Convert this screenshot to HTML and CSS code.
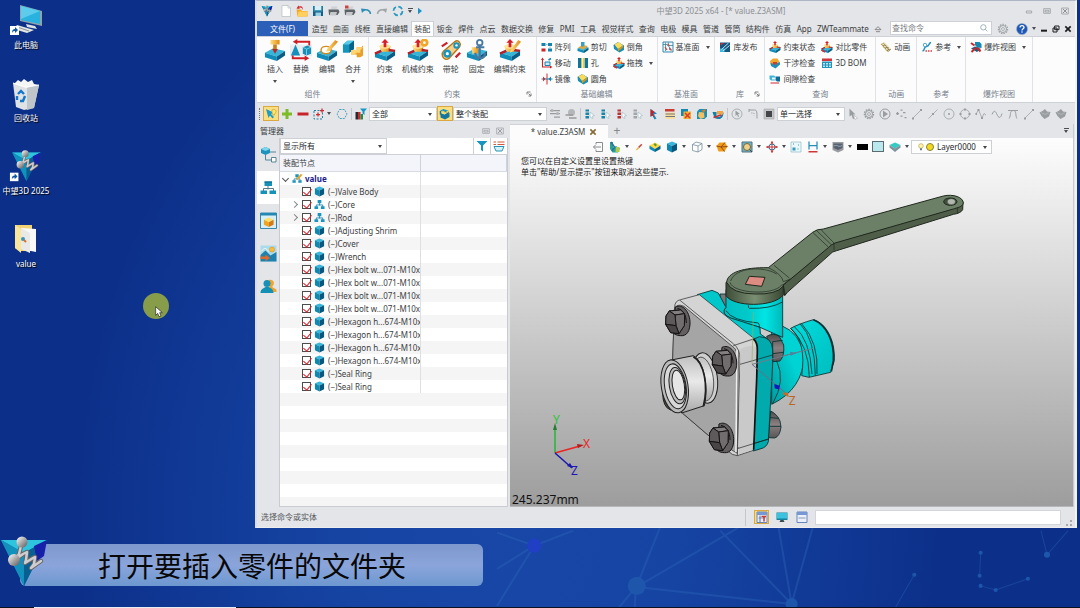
FILE: index.html
```html
<!DOCTYPE html>
<html lang="zh-CN">
<head>
<meta charset="utf-8">
<meta name="viewport" content="width=device-width, initial-scale=1">
<title>中望3D 2025 x64</title>
<link rel="stylesheet" href="styles.css">
</head>
<body>
<svg class="sprite" aria-hidden="true">
  <defs>
    <linearGradient id="gTeal" x1="0" x2="1"><stop offset="0" stop-color="#25b4dc"/><stop offset="1" stop-color="#0b6d9c"/></linearGradient>
    <linearGradient id="gGold" x1="0" x2="1"><stop offset="0" stop-color="#ffe083"/><stop offset="1" stop-color="#e08a12"/></linearGradient>
    <linearGradient id="gMetal" x1="0" x2="1" y2="1"><stop offset="0" stop-color="#fff"/><stop offset=".5" stop-color="#aaa"/><stop offset="1" stop-color="#5c5557"/></linearGradient>
  </defs>
  <symbol id="slab" viewBox="0 0 24 24"><path d="M1 15l9-5 13 3-9 6z" fill="#35b5d8"/><path d="M1 15l13 4v5L1 20z" fill="#118cb8"/><path d="M14 19l9-6v5l-9 6z" fill="#0a5e86"/></symbol>
  <symbol id="logo" viewBox="0 0 48 52">
    <path d="M1 4h46L24 50z" fill="#0a7fae"/><path d="M1 4h46L24 17z" fill="#2fc4de"/><path d="M1 4l23 13v33z" fill="#1291bd"/><path d="M47 4L24 17v33z" fill="#075f92"/><path d="M47 4L34 10l3 15 7-5z" fill="#1620a8"/>
    <path d="M22 6l-3 12-4 6M16 23l7-5 4-2-1 8-1 3 8-5 2-1-1 7-3 4 10-7" fill="none" stroke="#66656a" stroke-width="4.500" stroke-linecap="round" stroke-linejoin="round"/><path d="M22 6l-3 12-4 6M16 23l7-5 4-2-1 8-1 3 8-5 2-1-1 7-3 4 10-7" fill="none" stroke="#cfcdcf" stroke-width="2.500" stroke-linecap="round" stroke-linejoin="round"/>
    <circle cx="22" cy="6" r="5.500" fill="url(#gMetal)"/><circle cx="14" cy="24" r="6" fill="url(#gMetal)"/>
  </symbol>
  <symbol id="pc" viewBox="0 0 34 34">
    <path d="M11 1l22 6v15l-22-5z" fill="#8fa3ab"/><path d="M12 2l19 5v13l-19-4z" fill="#29b2df"/><path d="M12 2l19 5-19 8z" fill="#5ccbec"/><path d="M17 20l9 2 2 3-10-2z" fill="#dce2e4"/><path d="M8 21l17 5-7 3-13-4z" fill="#e2e5e4"/><path d="M8 23l12 4" stroke="#8b9695"/>
    <path d="M1 22h9v9H1z" fill="#fff"/><path d="M3 29c0-3 1-4 3-4v-2l3 3-3 3v-2c-1 0-2 0-3 2z" fill="#12559f"/></symbol>
  <symbol id="bin" viewBox="0 0 34 34"><path d="M4 6l26 2-5 23-10 2-8-3z" fill="#dfe3e5"/><path d="M30 8l-5 23-7 2V8z" fill="#bfc6ca"/><path d="M5 7l4-4 3 2 3-3 4 3 4-2 2 4 4 1-12 3z" fill="#f4f5f5"/><path d="M4 6l13 4 13-2" fill="none" stroke="#fff"/><path d="M9 17l3-3 3 3m1 2-2 5h-3m-3-1v-4" fill="none" stroke="#1277cb" stroke-width="2.400"/></symbol>
  <symbol id="app" viewBox="0 0 34 36"><use href="#logo" x="1" y="0" width="33" height="34"/><path d="M0 24h9v9H0z" fill="#fff"/><path d="M2 31c0-3 1-4 3-4v-2l3 3-3 3v-2c-1 0-2 0-3 2z" fill="#12559f"/></symbol>
  <symbol id="folder" viewBox="0 0 34 34"><path d="M6 2h17v26H11l-5-3z" fill="#f2d477"/><path d="M12 5l15 1v23l-15-3z" fill="#f9f9f8"/><path d="M12 5l9 5v20l-9-4z" fill="#e9e9e8"/><path d="M6 2l6 4v24l-6-5z" fill="#fbe49b"/><circle cx="14" cy="16" r="2" fill="#3d93c0"/><path d="M15 17l2 2" stroke="#d77325" stroke-width="2"/></symbol>
  <symbol id="cube" viewBox="0 0 24 24"><path d="M12 1l10 4-10 5L2 5z" fill="#39b6da"/><path d="M2 5l10 5v13L2 18z" fill="#0e89b2"/><path d="M22 5l-10 5v13l10-5z" fill="#08577e"/></symbol>
  <symbol id="gcube" viewBox="0 0 24 24"><path d="M12 2l10 5-10 5L2 7z" fill="#ffe06a"/><path d="M2 7l10 5v10L2 17z" fill="#f1a51d"/><path d="M22 7l-10 5v10l10-5z" fill="#d67a12"/></symbol>
  <symbol id="asm" viewBox="0 0 24 24"><path d="M12 9v5M5 17v-4h14v4" stroke="#2286b0" stroke-width="2" fill="none"/><path d="M8 2h8v7H8zM1 16h8v6H1zM15 16h8v6h-8z" fill="#1c93be"/></symbol>
  <symbol id="asmedit" viewBox="0 0 24 24"><use href="#asm" width="22" height="24"/><path d="M11 11L19 2l4 2-9 10-4 1z" fill="#efa21c"/></symbol>
  <symbol id="stamp" viewBox="0 0 24 24"><use href="#slab"/><path d="M7 1h10v5H7z" fill="url(#gGold)"/><path d="M10 6h4v5h-4z" fill="#c9801a"/><path d="M9 11h6l-3 5z" fill="#c32020"/></symbol>
  <symbol id="swap" viewBox="0 0 24 24"><path d="M0 6h24v13H0z" fill="#e9edf0"/><path d="M6 6l5 12H1z" fill="#1691bd"/><path d="M14 9l5-2 4 2v7l-5 2-4-2z" fill="#198fb8"/><path d="M14 9l4 2 5-2M18 11v7" stroke="#75d3ea" fill="none"/><path d="M21 7V3H7M3 18v3h14" stroke="#d01e26" stroke-width="2" fill="none"/><path d="M8 0v6L3 3zM16 18v6l5-3z" fill="#d01e26"/></symbol>
  <symbol id="edit" viewBox="0 0 24 24"><use href="#slab"/><ellipse cx="11" cy="12" rx="5.500" ry="4" fill="#fff" stroke="#d18a20" stroke-width="1.500"/><path d="M12 11L21 1l3 2-9 10-4 1z" fill="url(#gGold)"/></symbol>
  <symbol id="merge" viewBox="0 0 24 24"><path d="M1 6l5-4h7v9l-5 4H1z" fill="#1794bd"/><path d="M1 6l5-4h7L8 6z" fill="#58c9e6"/><path d="M8 6l5-4v9l-5 4z" fill="#086287"/><path d="M10 12h6V9h5l2-2v11l-3 2h-4v-3h-6z" fill="#e7a12b"/><path d="M10 12h6V9h7l-3 3v3h-4l-3 2h-3z" fill="#ffd473"/></symbol>
  <symbol id="con" viewBox="0 0 24 24"><use href="#slab"/><path d="M6 8h12l-1 6H8z" fill="url(#gGold)"/><ellipse cx="12" cy="8" rx="6" ry="2.500" fill="#ffe49a"/><path d="M1 16l7-3m15 0-7-1" stroke="#b71f2b" stroke-width="2.500"/><path d="M12 0l4 4h-2.500v5h-3V4H8z" fill="#d4202a"/></symbol>
  <symbol id="congear" viewBox="0 0 24 24"><use href="#con"/><circle cx="19" cy="4" r="3" fill="none" stroke="#f1a626" stroke-width="3"/></symbol>
  <symbol id="belt" viewBox="0 0 24 24"><path d="M4 13L16 3c4-3 8 2 5 6L10 21c-5 4-10-3-6-8z" fill="#f5d087" stroke="#b6751b" stroke-width="1.500"/><circle cx="18" cy="7" r="3.500" fill="#1995bf"/><circle cx="8" cy="16" r="4.500" fill="#1995bf"/><circle cx="8" cy="16" r="1.700" fill="#fff"/><circle cx="18" cy="7" r="1.300" fill="#fff"/><path d="M2 8L8 4M17 20l5-5" stroke="#ce2028" stroke-width="2.500"/></symbol>
  <symbol id="anchor" viewBox="0 0 24 24"><use href="#slab"/><path d="M6 9h8l-1 7H7z" fill="url(#gGold)"/><path d="M15 6v15M10 15c1 8 10 8 11 0M11 9h9" stroke="#4679a1" stroke-width="2.300" fill="none"/><circle cx="15" cy="4" r="3" fill="none" stroke="#4679a1" stroke-width="2"/></symbol>
  <symbol id="conedit" viewBox="0 0 24 24"><use href="#con"/><path d="M13 12L21 1l3 2-8 10-4 2z" fill="url(#gGold)"/></symbol>
  <symbol id="array" viewBox="0 0 24 24"><path d="M1 4h8v6H1zM14 4h8v6h-8z" fill="#1284ae"/><path d="M1 15h8v6H1z" fill="#cc2428"/><path d="M14 15h8v6h-8z" fill="#1284ae"/><path d="M10 7h3M18 11v3" stroke="#88bfd2" stroke-width="2"/></symbol>
  <symbol id="cut" viewBox="0 0 24 24"><use href="#slab"/><path d="M2 13l10-5 10 2-9 7z" fill="#e3a83b"/><path d="M8 2h7v7l-4 3-3-2z" fill="#3d9ec0"/></symbol>
  <symbol id="cham" viewBox="0 0 24 24"><path d="M1 8L10 2l12 7v9l-9 5L2 16z" fill="#1690b9"/><path d="M3 7l8-5 9 7-10 7z" fill="#ffda58"/><path d="M10 16l10-7v4l-10 8z" fill="#d8931d"/></symbol>
  <symbol id="move" viewBox="0 0 24 24"><path d="M3 4v16h17" stroke="#c9202a" stroke-width="2.200" fill="none"/><path d="M8 10h10v7H8z" fill="#c6eaf6" stroke="#1685af" stroke-width="2"/><path d="M0 6l3-5 3 5zM18 17l5 3-5 3z" fill="#c9202a"/><path d="M15 6l5-3" stroke="#1685af" stroke-width="3"/></symbol>
  <symbol id="hole" viewBox="0 0 24 24"><path d="M2 2h7v20H2zM15 2h7v20h-7z" fill="#0a75a0"/><path d="M9 2h6v20H9z" fill="#ffc43c"/><path d="M10 2h2v20h-2z" fill="#fff1ac"/></symbol>
  <symbol id="mirror" viewBox="0 0 24 24"><path d="M12 1v22" stroke="#d22c31" stroke-width="2"/><path d="M1 12h22" stroke="#1684ad" stroke-width="2"/><path d="M4 7l5 5-5 5z" fill="#d22c31"/><path d="M20 7l-5 5 5 5z" fill="#1684ad"/></symbol>
  <symbol id="drag" viewBox="0 0 24 24"><use href="#con"/><path d="M1 18l7 4" stroke="#d22c31" stroke-width="3"/></symbol>
  <symbol id="datum" viewBox="0 0 24 24"><path d="M2 2h20v20H2z" fill="#eef7fb" stroke="#3a88ad" stroke-width="2"/><path d="M7 3v17M10 8l5 4v6M2 7h8M13 3v6h9" stroke="#2c86ad" stroke-width="1.500" fill="none"/><path d="M6 12l4 6M15 14l4 5M11 6l4 4" stroke="#c94b42" stroke-width="2.500"/></symbol>
  <symbol id="lib" viewBox="0 0 24 24"><path d="M2 3h20v19H2z" fill="#15557f"/><path d="M2 15h9v7H2z" fill="#39b9df"/><path d="M5 17L19 4M8 20L21 9" stroke="#b8e3f1" stroke-width="2"/><path d="M3 4h7L4 9z" fill="#cb3038"/></symbol>
  <symbol id="interf" viewBox="0 0 24 24"><path d="M2 8l6-5h9l4 7-7 6-11-1z" fill="#f1a72c"/><path d="M3 12l9 2 10-4v5l-9 8-9-5z" fill="#1f8fba"/><path d="M8 10h8v5H8z" fill="#cb412e"/></symbol>
  <symbol id="gap" viewBox="0 0 24 24"><path d="M1 5h9l3 3v7H4l-3-3z" fill="#3fb5da"/><path d="M13 7h9v10h-6l-3-3z" fill="#0e6c98"/><path d="M3 20h17" stroke="#d22c31" stroke-width="2"/><path d="M6 9h7v4H6z" fill="#eaf8fd"/></symbol>
  <symbol id="bom" viewBox="0 0 24 24"><path d="M2 9h20v13H2z" fill="#2294bc"/><path d="M4 12h4v3H4zM10 12h4v3h-4zM16 12h4v3h-4zM4 17h4v3H4zM10 17h4v3h-4zM16 17h4v3h-4z" fill="#bce8f5"/><path d="M2 3h20v5H2z" fill="#cf3539"/></symbol>
  <symbol id="film" viewBox="0 0 24 24"><path d="M2 6l6-3 14 14-6 5z" fill="#8b7b50"/><path d="M5 5l12 15M9 4l11 12" stroke="#f1e8bd" stroke-width="3" stroke-dasharray="4 2"/><path d="M2 6l13 16" stroke="#d0a836" stroke-width="2" stroke-dasharray="2 2"/></symbol>
  <symbol id="refer" viewBox="0 0 24 24"><path d="M3 20c6-1 1-8 8-9s3-7 9-8" fill="none" stroke="#2590bb" stroke-width="3"/><circle cx="8" cy="8" r="3.500" fill="none" stroke="#51adca" stroke-width="2"/><path d="M9 20h13" stroke="#c94343" stroke-width="3" stroke-dasharray="3 2"/></symbol>
  <symbol id="explode" viewBox="0 0 24 24"><path d="M10 2h9l4 4v8l-9-1-4-5z" fill="#1288b2"/><path d="M2 15l8-4 12 5-8 6z" fill="#116184"/><path d="M2 4l7 5M3 22l8-8M14 13l7 8" stroke="#cf2429" stroke-width="4"/></symbol>
  <symbol id="new" viewBox="0 0 24 24"><path d="M4 1h12l5 5v17H4z" fill="#fff" stroke="#9ea8ae"/><path d="M16 1v5h5" fill="none" stroke="#9ea8ae"/></symbol>
  <symbol id="open" viewBox="0 0 24 24"><path d="M1 9h9l2 3h11v11H3z" fill="#f3a922"/><path d="M5 13h19l-3 10H3z" fill="#ffd05b"/><path d="M5 1l-4 6 7 1-2-2c3-2 6-1 7 4 2-7-2-9-7-7z" fill="#d1262b"/></symbol>
  <symbol id="save" viewBox="0 0 24 24"><path d="M2 2h20v20H2z" fill="#185e86"/><path d="M5 2h14v9H5z" fill="#d7eef6"/><path d="M7 15h11v7H7z" fill="#9ccfdf"/><path d="M3 2h2v9h14V2h2v11H3z" fill="#2992b8"/></symbol>
  <symbol id="print" viewBox="0 0 24 24"><path d="M7 3h12l-2 6H6z" fill="#cfd2d4"/><path d="M1 9h20l2 5-4 6H2z" fill="#5d6267"/><path d="M5 14h13l-2 7H3z" fill="#c5c8ca"/></symbol>
  <symbol id="printset" viewBox="0 0 24 24"><use href="#print"/><path d="M2 1h7v6H2z" fill="#ca4542"/></symbol>
  <symbol id="undo" viewBox="0 0 24 24"><path d="M21 18c-1-8-10-11-15-6" fill="none" stroke="currentColor" stroke-width="3"/><path d="M2 7l9 1-7 8z" fill="currentColor"/></symbol>
  <symbol id="redo" viewBox="0 0 24 24"><path d="M3 18c1-8 10-11 15-6" fill="none" stroke="currentColor" stroke-width="3"/><path d="M22 7l-9 1 7 8z" fill="currentColor"/></symbol>
  <symbol id="ring" viewBox="0 0 24 24"><circle cx="12" cy="12" r="9" fill="none" stroke="#2698bf" stroke-width="3.500" stroke-dasharray="9 5"/></symbol>
  <symbol id="play" viewBox="0 0 24 24"><path d="M6 2l12 10L6 22z" fill="#1b91ca"/></symbol>
  <symbol id="pick" viewBox="0 0 24 24"><path d="M2 2l5 18 3-5 5 6 3-3-6-6 5-3z" fill="#1a9ccc"/><path d="M14 4c4-3 9 0 8 4-1 3-3 3-3 6h-3c0-3-3-3-2-10z" fill="#ffe766" stroke="#a3832c"/></symbol>
  <symbol id="plus" viewBox="0 0 24 24"><path d="M9 2h6v7h7v6h-7v7H9v-7H2V9h7z" fill="#7fbb24"/></symbol>
  <symbol id="minus" viewBox="0 0 24 24"><path d="M1 9h22v6H1z" fill="#c8232b"/></symbol>
  <symbol id="boxsel" viewBox="0 0 24 24"><path d="M2 5h17v17H2z" fill="none" stroke="#257fa5" stroke-width="2" stroke-dasharray="4 3"/><path d="M10 9v8M6 13h8M18 1v8M14 5h8" stroke="#d02b30" stroke-width="2.500"/></symbol>
  <symbol id="hexa" viewBox="0 0 24 24"><path d="M7 3h10l5 9-5 9H7l-5-9z" fill="none" stroke="#4e9fbc" stroke-width="2" stroke-dasharray="4 2"/></symbol>
  <symbol id="bars" viewBox="0 0 24 24"><path d="M1 8h5v15H1z" fill="#272a2c"/><path d="M6 8h5v15H6z" fill="#c92a2b"/><path d="M11 12h5v11h-5z" fill="#258846"/><path d="M10 1h14l-5 6v7l-4-3V7z" fill="#1996c3"/></symbol>
  <symbol id="scope" viewBox="0 0 24 24"><path d="M2 5l7-3 11 4-6 4z" fill="#1c96bf"/><path d="M3 11l8 3 10-4v8l-9 5-9-4z" fill="#1476a0"/><path d="M3 6v6l8 3 9-6" stroke="#1476a0" stroke-width="3" fill="none"/><path d="M6 6l7 3 6-3" stroke="#ffd553" stroke-width="2" fill="none"/></symbol>
  <symbol id="g1" viewBox="0 0 24 24"><path d="M2 5h20M2 11h20M10 18h12" stroke="#999b9d" stroke-width="2.500"/><circle cx="6" cy="5" r="3" fill="#b0b2b4"/><circle cx="17" cy="11" r="3" fill="#b0b2b4"/></symbol>
  <symbol id="g2" viewBox="0 0 24 24"><circle cx="13" cy="9" r="7" fill="#b4b7b9"/><path d="M1 14h15M8 20h15" stroke="#999" stroke-width="3"/></symbol>
  <symbol id="flt" viewBox="0 0 24 24"><path d="M3 3h7v4H3zM3 9h7v5H3zM3 16h7v5H3z" fill="currentColor"/><path d="M12 8l9 7-4 1 1 5-6-3z" fill="#f7f7f7" stroke="#8badbb"/></symbol>
  <symbol id="redcur" viewBox="0 0 24 24"><path d="M5 2l13 9-6 2 5 8-4 2-4-8-4 3z" fill="#138fbd"/><path d="M5 2l8 6-3 3 3 9-4-5-4 2z" fill="#c72029"/></symbol>
  <symbol id="list" viewBox="0 0 24 24"><path d="M2 2h19v5H2z" fill="#ca3b31"/><path d="M3 9h19v13H3z" fill="#f8df9e"/><path d="M3 12h19M3 17h19" stroke="#747474" stroke-width="2"/></symbol>
  <symbol id="stack" viewBox="0 0 24 24"><path d="M2 2h14v14H2z" fill="#1687b0"/><path d="M7 7h15v15H7z" fill="#f4af30"/><path d="M10 10l10 10m0-10L10 20" stroke="#d73d2a" stroke-width="3"/></symbol>
  <symbol id="sbox" viewBox="0 0 24 24"><path d="M2 7l5-5h15v15l-5 5H2z" fill="#1790b6"/><path d="M6 8l10 1 1 10-8 3-5-6z" fill="#f1c064"/><path d="M11 5l9-3-4 8z" fill="#dd7926"/></symbol>
  <symbol id="band" viewBox="0 0 24 24"><path d="M1 8h8v9c5 3 10 0 11-8h3c0 12-8 16-18 11z" fill="#167eab"/><path d="M10 6h12v7H10z" fill="#f2a443"/><path d="M3 19l15-5" stroke="#c93131" stroke-width="3"/></symbol>
  <symbol id="gcircle" viewBox="0 0 24 24"><circle cx="12" cy="12" r="10" fill="none" stroke="currentColor" stroke-width="1.500"/><path d="M9 5v11l3-3 2 5 2-1-2-5h4z" fill="currentColor"/></symbol>
  <symbol id="gbend" viewBox="0 0 24 24"><path d="M4 4h11c5 0 5 4 5 17M4 2v6" stroke="currentColor" stroke-width="2" fill="none"/><path d="M8 10h6v5" stroke="currentColor" stroke-width="1.500" fill="none" stroke-dasharray="3 2"/></symbol>
  <symbol id="gsq" viewBox="0 0 24 24"><path d="M2 2h20v20H2z" fill="#c4c6c8" stroke="#999"/><path d="M6 6h12v12H6z" fill="#44474a"/></symbol>
  <symbol id="gcur" viewBox="0 0 24 24"><path d="M5 1v16l4-3 3 8 3-1-3-8h5z" fill="currentColor"/><path d="M13 14l8 6-5 3z" fill="#fff" stroke="currentColor"/></symbol>
  <symbol id="gear" viewBox="0 0 24 24"><circle cx="12" cy="12" r="9" fill="none" stroke="currentColor" stroke-width="3" stroke-dasharray="3 2"/><circle cx="12" cy="12" r="7" fill="none" stroke="currentColor" stroke-width="2"/><circle cx="12" cy="12" r="3" fill="none" stroke="currentColor" stroke-width="1.500"/></symbol>
  <symbol id="gplay" viewBox="0 0 24 24"><circle cx="12" cy="12" r="10" fill="none" stroke="currentColor" stroke-width="2"/><path d="M8 5l10 7-10 7z" fill="currentColor"/></symbol>
  <symbol id="gdots" viewBox="0 0 24 24"><path d="M2 11h6M5 8v6M11 4h4M16 9h5M11 16h4M19 19h4" stroke="currentColor" stroke-width="2.500"/></symbol>
  <symbol id="gline" viewBox="0 0 24 24"><path d="M4 20L20 4" stroke="currentColor" stroke-width="1.500"/><path d="M2 19h4v4H2zM18 2h4v4h-4z" fill="currentColor"/></symbol>
  <symbol id="gmid" viewBox="0 0 24 24"><path d="M3 21L21 3" stroke="currentColor" stroke-width="1.500"/><path d="M10 10h4v4h-4z" fill="currentColor"/></symbol>
  <symbol id="gcen" viewBox="0 0 24 24"><circle cx="12" cy="12" r="10" fill="none" stroke="currentColor" stroke-width="1.500"/><circle cx="12" cy="12" r="2" fill="currentColor"/></symbol>
  <symbol id="gquad" viewBox="0 0 24 24"><circle cx="12" cy="12" r="9" fill="none" stroke="currentColor" stroke-width="1.500"/><path d="M10 1h4v4h-4zM10 19h4v4h-4zM1 10h4v4H1zM19 10h4v4h-4z" fill="currentColor"/></symbol>
  <symbol id="gzig" viewBox="0 0 24 24"><path d="M2 12L7 4l7 16 4-9 4 3" fill="none" stroke="currentColor" stroke-width="1.500"/><path d="M5 2h4v4H5zM12 18h4v4h-4zM1 10h3v4H1z" fill="currentColor"/></symbol>
  <symbol id="gwave" viewBox="0 0 24 24"><path d="M2 13C6 3 9 6 12 13s7 9 10-2" fill="none" stroke="currentColor" stroke-width="2"/></symbol>
  <symbol id="garc" viewBox="0 0 24 24"><path d="M2 5h20M4 21C9 15 4 6 12 5s4 11 8 16" fill="none" stroke="currentColor" stroke-width="2"/></symbol>
  <symbol id="gblob" viewBox="0 0 24 24"><path d="M1 9l6-3 5-4 4 5 7 1-3 9-9 5-6-6z" fill="currentColor"/><path d="M4 9l8 4 8-4" stroke="#c8cacc" fill="none"/></symbol>
  <symbol id="launch" viewBox="0 0 12 12"><path d="M2 7V2h7M5 5l4 4M10 5v5H5" stroke="#555" stroke-width="1.500" fill="none"/></symbol>
  <symbol id="m1" viewBox="0 0 34 34"><path d="M2 6l9-4 9 4v8l-9 4-9-4z" fill="#1d92bc"/><path d="M2 6l9 4 9-4-9-4z" fill="#80d6ef"/><path d="M20 12h12M11 18v10h13" fill="none" stroke="#58859a" stroke-width="2"/><path d="M23 23h9v9h-9z" fill="#fff" stroke="#58859a" stroke-width="2"/></symbol>
  <symbol id="m2" viewBox="0 0 34 34"><path d="M16 14v7M7 24v-5h20v5" stroke="#567b8b" stroke-width="2" fill="none"/><path d="M9 5h15v9H9zM1 23h13v7H1zM19 23h13v7H19z" fill="#1691b8"/><path d="M9 5h15v2H9z" fill="#086386"/></symbol>
  <symbol id="m3" viewBox="0 0 34 34"><path d="M1 2h32v31H1z" fill="#d8eef5" stroke="#3788ad" stroke-width="2"/><path d="M1 2h32v5H1z" fill="#2389b2"/><use href="#gcube" x="6" y="9" width="23" height="23"/></symbol>
  <symbol id="m4" viewBox="0 0 34 34"><path d="M1 1h32v32H1z" fill="#aadbea"/><path d="M1 33V20l10-9 10 10 12-7v19z" fill="#2081ac"/><path d="M2 13c7-8 10-8 15 0" fill="none" stroke="#f4f9fb" stroke-width="2"/><circle cx="24" cy="9" r="5" fill="#f6bc3d" stroke="#dc8616"/><path d="M1 23h10v-4l9 7-9 6v-4H1z" fill="#e06a2c"/></symbol>
  <symbol id="m5" viewBox="0 0 34 34"><path d="M18 4c8-3 14 6 6 14l9 5v5H20z" fill="#f1a32a"/><circle cx="14" cy="11" r="7" fill="#1890b8"/><path d="M1 30c0-8 6-9 10-12h7c3 3 9 3 9 12z" fill="#1590b5"/></symbol>
  <symbol id="funnel" viewBox="0 0 24 24"><path d="M1 2h22l-9 9v12l-4-3v-9z" fill="#1793bd"/></symbol>
  <symbol id="tray" viewBox="0 0 24 24"><path d="M1 4h5m3 0h14M1 9h5m3 0h14" stroke="#d4553d" stroke-width="2"/><path d="M2 13h20l-4 9H6z" fill="#d7f2fa" stroke="#2994b9" stroke-width="2"/></symbol>
  <symbol id="exit" viewBox="0 0 24 24"><path d="M8 7V3h13v18H8v-4M18 12H3m4-4l-4 4 4 4" fill="none" stroke="#898d90" stroke-width="2"/></symbol>
  <symbol id="show" viewBox="0 0 24 24"><path d="M2 2h6v12l6-4 8 5-4 8H7L2 16z" fill="#27a493"/><path d="M4 2l7 10-5 8" stroke="#2e6fa1" stroke-width="3" fill="none"/><path d="M14 12h7v10h-8z" fill="#b4cb4a"/></symbol>
  <symbol id="brush" viewBox="0 0 24 24"><path d="M9 12L19 2l3 3-9 10z" fill="#c84646"/><path d="M9 12l4 4-6 5-5 1 3-5z" fill="#ebbb46"/></symbol>
  <symbol id="goldtop" viewBox="0 0 24 24"><path d="M1 9l11-6 11 6-11 7z" fill="#ffd944"/><path d="M1 9l11 7v6L1 16z" fill="#128ab4"/><path d="M23 9l-11 7v6l11-6z" fill="#0a6589"/><path d="M12 4l4 4-3 3-4-4z" fill="#5b9d34"/></symbol>
  <symbol id="wire" viewBox="0 0 24 24"><path d="M3 7l7-5 12 3v12l-8 5-11-3zM3 7l11 3 8-5M14 10v12" fill="#fff" stroke="currentColor" stroke-width="1.500"/></symbol>
  <symbol id="gwire" viewBox="0 0 24 24"><path d="M7 3h11l5 8-6 10H5L1 10z" fill="#ef9d19"/><path d="M1 10l9 2 8-9M10 12l7 9M10 12l13-1" fill="none" stroke="#984913" stroke-width="2"/></symbol>
  <symbol id="zoom" viewBox="0 0 24 24"><path d="M2 2h20v20H2z" fill="#68b4cd" stroke="#57727e" stroke-width="2"/><circle cx="12" cy="12" r="7" fill="#eed18d" stroke="#80642f" stroke-width="2"/><path d="M17 17l5 5" stroke="#444" stroke-width="2"/></symbol>
  <symbol id="target" viewBox="0 0 24 24"><circle cx="12" cy="12" r="6" fill="none" stroke="#1d78a5" stroke-width="2"/><path d="M12 1v22M1 12h22" stroke="#cd3737" stroke-width="2"/><path d="M12 0l3 5H9zM12 24l3-5H9zM0 12l5-3v6zM24 12l-5-3v6z" fill="#cd3737"/></symbol>
  <symbol id="pic" viewBox="0 0 24 24"><path d="M2 2h20v20H2z" fill="#eaf8fc" stroke="#6aa2b7"/><path d="M5 13h6v6H5zM6 5h2v2H6zM16 7h2v2h-2zM15 15h2v2h-2z" fill="#3b9cba"/></symbol>
  <symbol id="hdim" viewBox="0 0 24 24"><path d="M4 1v16M20 1v16M4 9h16" stroke="#2190ba" stroke-width="2.500"/><path d="M3 20h18v3H3z" fill="#cf3737"/></symbol>
  <symbol id="shade" viewBox="0 0 24 24"><path d="M1 2h22v16l-11 5-11-5z" fill="#999da2"/><path d="M3 5h18v9l-9 4-9-4z" fill="#59616f"/><path d="M4 10c7-4 9 4 16-1" stroke="#8fabc4" stroke-width="2" fill="none"/></symbol>
  <symbol id="layers" viewBox="0 0 24 24"><path d="M1 8l11-5 11 5-11 7z" fill="#34cbc4"/><path d="M1 8l11 7 11-7v5l-11 9L1 13z" fill="#7c949b"/></symbol>
  <symbol id="help" viewBox="0 0 24 24"><circle cx="12" cy="12" r="11" fill="#1e58b4" stroke="#98abc5"/><path d="M8 9c0-5 8-5 8 0 0 3-4 2-4 6" fill="none" stroke="#fff" stroke-width="2.500"/><circle cx="12" cy="18" r="1.500" fill="#fff"/></symbol>
  <symbol id="search" viewBox="0 0 24 24"><circle cx="10" cy="10" r="8" fill="none" stroke="#71919d" stroke-width="2"/><path d="M16 16l6 6" stroke="#71919d" stroke-width="2"/></symbol>
  <symbol id="monitor" viewBox="0 0 24 24"><path d="M1 3h22v15H1z" fill="#14829d"/><path d="M2 4h20v11H2z" fill="#3ac2df"/><path d="M9 18h6l2 4H7z" fill="#384b51"/></symbol>
  <symbol id="pane" viewBox="0 0 24 24"><path d="M2 2h20v21H2z" fill="#eaf0fb" stroke="#6786bc" stroke-width="2"/><path d="M2 2h20v6H2z" fill="#7597d4"/><path d="M5 14h14" stroke="#8896b0" stroke-width="2"/></symbol>
  <symbol id="tpane" viewBox="0 0 24 24"><use href="#pane"/><path d="M8 9v13" stroke="#52769f" stroke-width="2"/><path d="M11 11h9M16 11v10" stroke="#c93734" stroke-width="3"/></symbol>
  <symbol id="bulb" viewBox="0 0 24 24"><circle cx="12" cy="9" r="7" fill="#fff6ab" stroke="#b6a443" stroke-width="2"/><path d="M9 16h6v6H9z" fill="#68788a"/></symbol>
  <symbol id="min" viewBox="0 0 24 24"><path d="M4 12h16v6H4z" fill="none" stroke="currentColor" stroke-width="2"/></symbol>
  <symbol id="max" viewBox="0 0 24 24"><path d="M2 5h20v14H2zM6 10h12v5H6z" fill="none" stroke="currentColor" stroke-width="2"/></symbol>
  <symbol id="close" viewBox="0 0 24 24"><path d="M2 3h20v18H2z" fill="none" stroke="currentColor" stroke-width="2"/><path d="M6 6l12 12M18 6L6 18" stroke="currentColor" stroke-width="3"/></symbol>
  <symbol id="x" viewBox="0 0 24 24"><path d="M4 4l16 16M20 4L4 20" stroke="currentColor" stroke-width="5"/></symbol>
  <symbol id="dash" viewBox="0 0 24 24"><path d="M3 14h18v6H3z" fill="currentColor"/></symbol>
  <symbol id="rest" viewBox="0 0 24 24"><path d="M8 3h13v11H8zM3 9h12v12H3z" fill="#e4e6e9" stroke="currentColor" stroke-width="3"/></symbol>
  <symbol id="cloud" viewBox="0 0 24 24"><path d="M3 14l9-9 9 9zM6 20h12" fill="none" stroke="#777" stroke-width="2.500"/></symbol>
</svg>

<main class="desktop">
  <svg class="net" viewBox="0 0 580 80" preserveAspectRatio="xMaxYMax slice" aria-hidden="true">
    <g stroke="#2d66b8" fill="none" opacity=".4"><path d="M0 5l37 13L76 3M37 18L0 41M37 18L0 78M162 0l-23 58-18 22M139 59L240 0M222 3l71 73L314 0M280 0l13 76M139 59l154 17M138 59l-1 21" stroke-width="2"/><path d="M415 47l-19 33M481 25l-1 23M481 58l15 4 32-11M541 3l6 24 21-24"/></g>
    <g fill="#1e56ac"><circle cx="37" cy="18" r="7" fill="#213fc4"/><circle cx="139" cy="58" r="9"/><circle cx="293" cy="76" r="6"/><circle cx="415" cy="47" r="2"/><circle cx="481" cy="25" r="2"/><circle cx="480" cy="48" r="2"/><circle cx="481" cy="58" r="2"/><circle cx="496" cy="62" r="2"/><circle cx="528" cy="51" r="2"/><circle cx="547" cy="27" r="3"/></g>
  </svg>
  <div class="upper">
    <nav class="shortcuts" aria-label="桌面">
      <a href="#pc"><svg><use href="#pc"/></svg>此电脑</a>
      <a href="#bin"><svg><use href="#bin"/></svg>回收站</a>
      <a href="#zw3d"><svg><use href="#app"/></svg>中望3D 2025</a>
      <a href="#value"><svg><use href="#folder"/></svg>value</a>
    </nav>

    <section class="window">
      <header class="title">
        <div class="quick">
          <svg class="i"><use href="#logo"/></svg>
          <button aria-label="新建"><svg class="i"><use href="#new"/></svg></button>
          <button aria-label="打开"><svg class="i"><use href="#open"/></svg></button>
          <button aria-label="保存"><svg class="i"><use href="#save"/></svg></button>
          <button aria-label="打印"><svg class="i"><use href="#print"/></svg></button>
          <button aria-label="打印设置"><svg class="i"><use href="#printset"/></svg></button>
          <button aria-label="撤销" class="blue"><svg class="i"><use href="#undo"/></svg></button>
          <button aria-label="重做" class="gray"><svg class="i"><use href="#redo"/></svg></button>
          <button aria-label="刷新"><svg class="i"><use href="#ring"/></svg></button>
          <button aria-label="更多" class="slim caret bar"></button>
          <button aria-label="播放" class="slim"><svg class="s"><use href="#play"/></svg></button>
        </div>
        <h1>中望3D 2025 x64 - [* value.Z3ASM]</h1>
        <div class="wctl"><button aria-label="最小化"><svg class="s"><use href="#min"/></svg></button><button aria-label="最大化"><svg class="s"><use href="#max"/></svg></button><button aria-label="关闭"><svg class="s"><use href="#close"/></svg></button></div>
      </header>

      <nav class="menu" aria-label="功能区">
        <button class="file">文件(F)</button>
        <div class="tabs">
          <button>造型</button><button>曲面</button><button>线框</button><button>直接编辑</button><button class="on">装配</button><button>钣金</button><button>焊件</button><button>点云</button><button>数据交换</button><button>修复</button><button>PMI</button><button>工具</button><button>视觉样式</button><button>查询</button><button>电极</button><button>模具</button><button>管道</button><button>管筒</button><button>结构件</button><button>仿真</button><button>App</button><button>ZWTeammate</button><button aria-label="折叠"><svg class="s"><use href="#cloud"/></svg></button>
        </div>
        <label class="find"><input type="text" placeholder="查找命令" aria-label="查找命令"><svg class="s"><use href="#search"/></svg></label>
        <div class="mctl"><button class="gray" aria-label="设置"><svg class="i"><use href="#gear"/></svg></button><button aria-label="帮助"><svg class="i"><use href="#help"/></svg></button><i class="caret"></i><button aria-label="最小化文档"><svg class="s"><use href="#dash"/></svg></button><button aria-label="还原文档"><svg class="s"><use href="#rest"/></svg></button><button aria-label="关闭文档"><svg class="s"><use href="#x"/></svg></button></div>
      </nav>

      <div class="ribbon">
        <section><div class="bigs">
          <button class="w26"><svg><use href="#stamp"/></svg>插入<i class="caret"></i></button><button class="w26"><svg><use href="#swap"/></svg>替换</button><button class="w26"><svg><use href="#edit"/></svg>编辑</button><button class="w26"><svg><use href="#merge"/></svg>合并<i class="caret"></i></button>
        </div><h2>组件</h2></section>
        <section><div class="bigs">
          <button class="w26"><svg><use href="#con"/></svg>约束</button><button class="w40"><svg><use href="#congear"/></svg>机械约束</button><button class="w26"><svg><use href="#belt"/></svg>带轮</button><button class="w26"><svg><use href="#anchor"/></svg>固定</button><button class="w40"><svg><use href="#conedit"/></svg>编辑约束</button>
        </div><h2>约束</h2><button class="launch" aria-label="约束设置"><svg><use href="#launch"/></svg></button></section>
        <section><div class="smalls">
          <button><svg class="i"><use href="#array"/></svg>阵列</button><button><svg class="i"><use href="#move"/></svg>移动</button><button><svg class="i"><use href="#mirror"/></svg>镜像</button>
          <button><svg class="i"><use href="#cut"/></svg>剪切</button><button><svg class="i"><use href="#hole"/></svg>孔</button><button><svg class="i"><use href="#cham"/></svg>圆角</button>
          <button><svg class="i"><use href="#cham"/></svg>倒角</button><button><svg class="i"><use href="#drag"/></svg>拖拽<i class="caret"></i></button>
        </div><h2>基础编辑</h2></section>
        <section><div class="smalls"><button><svg class="i"><use href="#datum"/></svg>基准面<i class="caret"></i></button></div><h2>基准面</h2></section>
        <section><div class="smalls"><button><svg class="i"><use href="#lib"/></svg>库发布</button></div><h2>库</h2><button class="launch" aria-label="库设置"><svg><use href="#launch"/></svg></button></section>
        <section><div class="smalls wide">
          <button><svg class="i"><use href="#con"/></svg>约束状态</button><button><svg class="i"><use href="#interf"/></svg>干涉检查</button><button><svg class="i"><use href="#gap"/></svg>间隙检查</button>
          <button><svg class="i"><use href="#drag"/></svg>对比零件</button><button><svg class="i"><use href="#bom"/></svg>3D BOM</button>
        </div><h2>查询</h2></section>
        <section><div class="smalls"><button><svg class="i"><use href="#film"/></svg>动画</button></div><h2>动画</h2></section>
        <section><div class="smalls"><button><svg class="i"><use href="#refer"/></svg>参考<i class="caret"></i></button></div><h2>参考</h2></section>
        <section><div class="smalls"><button><svg class="i"><use href="#explode"/></svg>爆炸视图<i class="caret"></i></button></div><h2>爆炸视图</h2></section>
      </div>

      <div class="toolbar" role="toolbar" aria-label="选择工具">
        <i class="grip"></i>
        <button class="hl" aria-label="拾取"><svg class="i"><use href="#pick"/></svg></button>
        <button aria-label="添加"><svg class="i"><use href="#plus"/></svg></button>
        <button aria-label="移除"><svg class="i"><use href="#minus"/></svg></button>
        <button aria-label="框选"><svg class="i"><use href="#boxsel"/></svg></button><i class="caret"></i>
        <button class="push" aria-label="多边形"><svg class="i"><use href="#hexa"/></svg></button><i class="sep"></i>
        <button aria-label="过滤颜色"><svg class="i"><use href="#bars"/></svg></button>
        <span class="sel s1"><select aria-label="过滤器"><option>全部</option></select></span>
        <button class="hl" aria-label="范围"><svg class="i"><use href="#scope"/></svg></button>
        <span class="sel s2"><select aria-label="选择范围"><option>整个装配</option></select></span>
        <button aria-label="对齐"><svg class="i"><use href="#g1"/></svg></button>
        <button aria-label="显示"><svg class="i"><use href="#g2"/></svg></button><i class="sep"></i>
        <button class="teal" aria-label="过滤一"><svg class="i"><use href="#flt"/></svg></button>
        <button class="teal" aria-label="过滤二"><svg class="i"><use href="#flt"/></svg></button>
        <button class="red" aria-label="过滤三"><svg class="i"><use href="#flt"/></svg></button>
        <button class="gray" aria-label="过滤四"><svg class="i"><use href="#flt"/></svg></button>
        <button aria-label="光标"><svg class="i"><use href="#redcur"/></svg></button>
        <button aria-label="列表"><svg class="i"><use href="#list"/></svg></button>
        <button aria-label="叠放"><svg class="i"><use href="#stack"/></svg></button>
        <button aria-label="盒"><svg class="i"><use href="#sbox"/></svg></button>
        <button aria-label="带"><svg class="i"><use href="#band"/></svg></button><i class="sep"></i>
        <span class="grays">
          <button aria-label="指针"><svg class="i"><use href="#gcircle"/></svg></button>
          <button aria-label="弯曲"><svg class="i"><use href="#gbend"/></svg></button>
          <button aria-label="面"><svg class="i"><use href="#gsq"/></svg></button>
        </span>
        <span class="sel s3"><select aria-label="选择方式"><option>单一选择</option></select></span>
        <span class="grays">
          <button aria-label="选"><svg class="i"><use href="#gcur"/></svg></button>
          <button aria-label="齿轮"><svg class="i"><use href="#gear"/></svg></button>
          <button aria-label="运行"><svg class="i"><use href="#gplay"/></svg></button>
          <button aria-label="点"><svg class="i"><use href="#gdots"/></svg></button>
          <button aria-label="端点"><svg class="i"><use href="#gline"/></svg></button>
          <button aria-label="中点"><svg class="i"><use href="#gmid"/></svg></button>
          <button aria-label="圆心"><svg class="i"><use href="#gcen"/></svg></button>
          <button aria-label="象限"><svg class="i"><use href="#gquad"/></svg></button>
          <button aria-label="曲线"><svg class="i"><use href="#gzig"/></svg></button>
          <button aria-label="样条"><svg class="i"><use href="#gwave"/></svg></button>
          <button aria-label="相切"><svg class="i"><use href="#garc"/></svg></button>
          <button aria-label="线上点"><svg class="i"><use href="#gline"/></svg></button>
          <button aria-label="面上点"><svg class="i"><use href="#gblob"/></svg></button>
          <button aria-label="体"><svg class="i"><use href="#gblob"/></svg></button>
        </span>
      </div>

      <div class="work">
        <aside class="manager">
          <header><h2>管理器</h2><button aria-label="固定面板"><svg class="s"><use href="#max"/></svg></button><button aria-label="关闭面板"><svg class="s"><use href="#close"/></svg></button></header>
          <div class="mbody">
            <nav class="rail" aria-label="面板">
              <button aria-label="历史"><svg><use href="#m1"/></svg></button><button class="on" aria-label="装配"><svg><use href="#m2"/></svg></button><button aria-label="视图"><svg><use href="#m3"/></svg></button><button aria-label="视觉"><svg><use href="#m4"/></svg></button><button aria-label="角色"><svg><use href="#m5"/></svg></button>
            </nav>
            <div class="tree">
              <div class="filter">
                <span class="sel"><select aria-label="显示"><option>显示所有</option></select></span>
                <input type="text" aria-label="筛选">
                <button aria-label="筛选"><svg class="i"><use href="#funnel"/></svg></button><button aria-label="设置"><svg class="i"><use href="#tray"/></svg></button>
              </div>
              <div class="thead"><span>装配节点</span><span></span></div>
              <div class="rows">
                <ul>
                  <li class="root"><i class="down"></i><svg class="i"><use href="#asmedit"/></svg><b>value</b></li>
                  <li><label><input type="checkbox" checked><svg class="i"><use href="#cube"/></svg>(−)Valve Body</label></li>
                  <li class="sub"><label><input type="checkbox" checked><svg class="i"><use href="#asm"/></svg>(−)Core</label></li>
                  <li class="sub"><label><input type="checkbox" checked><svg class="i"><use href="#asm"/></svg>(−)Rod</label></li>
                  <li><label><input type="checkbox" checked><svg class="i"><use href="#cube"/></svg>(−)Adjusting Shrim</label></li>
                  <li><label><input type="checkbox" checked><svg class="i"><use href="#cube"/></svg>(−)Cover</label></li>
                  <li><label><input type="checkbox" checked><svg class="i"><use href="#cube"/></svg>(−)Wrench</label></li>
                  <li><label><input type="checkbox" checked><svg class="i"><use href="#cube"/></svg>(−)Hex bolt w...071-M10x</label></li>
                  <li><label><input type="checkbox" checked><svg class="i"><use href="#cube"/></svg>(−)Hex bolt w...071-M10x</label></li>
                  <li><label><input type="checkbox" checked><svg class="i"><use href="#cube"/></svg>(−)Hex bolt w...071-M10x</label></li>
                  <li><label><input type="checkbox" checked><svg class="i"><use href="#cube"/></svg>(−)Hex bolt w...071-M10x</label></li>
                  <li><label><input type="checkbox" checked><svg class="i"><use href="#cube"/></svg>(−)Hexagon h...674-M10x</label></li>
                  <li><label><input type="checkbox" checked><svg class="i"><use href="#cube"/></svg>(−)Hexagon h...674-M10x</label></li>
                  <li><label><input type="checkbox" checked><svg class="i"><use href="#cube"/></svg>(−)Hexagon h...674-M10x</label></li>
                  <li><label><input type="checkbox" checked><svg class="i"><use href="#cube"/></svg>(−)Hexagon h...674-M10x</label></li>
                  <li><label><input type="checkbox" checked><svg class="i"><use href="#cube"/></svg>(−)Seal Ring</label></li>
                  <li><label><input type="checkbox" checked><svg class="i"><use href="#cube"/></svg>(−)Seal Ring</label></li>
                </ul>
              </div>
            </div>
          </div>
        </aside>

        <section class="doc">
          <div class="dtabs"><button class="dtab">* value.Z3ASM<svg class="s"><use href="#x"/></svg></button><button class="add" aria-label="新标签">+</button><i class="caret bar"></i></div>
          <div class="view">
            <div class="vtools">
              <button aria-label="退出"><svg class="i"><use href="#exit"/></svg></button>
              <button class="drop" aria-label="显示隐藏"><svg class="i"><use href="#show"/></svg><i class="caret"></i></button>
              <button aria-label="笔刷"><svg class="s"><use href="#brush"/></svg></button>
              <button aria-label="基面"><svg class="i"><use href="#goldtop"/></svg></button>
              <button class="drop" aria-label="着色"><svg class="i"><use href="#cube"/></svg><i class="caret"></i></button>
              <button class="drop slate" aria-label="线框"><svg class="i"><use href="#wire"/></svg><i class="caret"></i></button>
              <button class="drop" aria-label="方向"><svg class="i"><use href="#gwire"/></svg><i class="caret"></i></button>
              <button class="drop" aria-label="缩放"><svg class="i"><use href="#zoom"/></svg><i class="caret"></i></button>
              <button class="drop" aria-label="对准"><svg class="i"><use href="#target"/></svg><i class="caret"></i></button>
              <button aria-label="图像"><svg class="i"><use href="#pic"/></svg></button>
              <button class="drop" aria-label="尺寸"><svg class="i"><use href="#hdim"/></svg><i class="caret"></i></button>
              <button class="drop" aria-label="外观"><svg class="i"><use href="#shade"/></svg><i class="caret"></i></button>
              <button aria-label="线色"><i class="sw black"></i></button>
              <button aria-label="面色"><i class="sw cyan"></i></button>
              <button class="drop" aria-label="图层"><svg class="i"><use href="#layers"/></svg><i class="caret"></i></button>
              <span class="sel layer"><svg class="s"><use href="#bulb"/></svg><i class="dot"></i><select aria-label="当前图层"><option>Layer0000</option></select></span>
            </div>
            <p class="tip">您可以在自定义设置里设置热键<br>单击"帮助/显示提示"按钮来取消这些提示.</p>

            <svg class="model" viewBox="0 0 1020 870" role="img" aria-label="球阀装配">
              <defs>
                <linearGradient id="neck" x1="0" x2="1"><stop offset="0" stop-color="#00bfc2"/><stop offset=".4" stop-color="#00c9ca"/><stop offset=".7" stop-color="#00e5e4"/><stop offset="1" stop-color="#00b8ba"/></linearGradient>
                <linearGradient id="port" x1="0" x2="1" y2="1"><stop offset="0" stop-color="#00dede"/><stop offset="1" stop-color="#00bcbf"/></linearGradient>
                <linearGradient id="sphere" x1="0" x2="1" y1="1" y2="0"><stop offset="0" stop-color="#009c9f"/><stop offset=".6" stop-color="#00d3d4"/></linearGradient>
                <linearGradient id="disc" x1="0" x2="1"><stop offset="0" stop-color="#3d4c38"/><stop offset=".5" stop-color="#7a8f72"/><stop offset="1" stop-color="#394733"/></linearGradient>
                <linearGradient id="pipe" x1="0" x2="0" y1="0" y2="1"><stop offset="0" stop-color="#bfbfbf"/><stop offset=".45" stop-color="#e9e9e9"/><stop offset="1" stop-color="#a9a9a9"/></linearGradient>
                <linearGradient id="nut" x1="0" x2="0" y1="0" y2="1"><stop offset="0" stop-color="#4f4949"/><stop offset=".5" stop-color="#8a8081"/><stop offset="1" stop-color="#5a5454"/></linearGradient>
                <g id="bolt" stroke="#161414" stroke-width="3" stroke-linejoin="round">
                  <path d="M-4-44c22-10 42 12 44 44 1 28-10 44-28 42-15 0-22-8-22-8z" fill="#635e5f"/>
                  <path d="M2-40c18 4 27 22 27 44" fill="none"/>
                  <path d="M-22-32L12-35 25-18 23 12 7 36-18 33-33 8-32-17z" fill="#4a4647"/>
                  <path d="M-22-32L-5-20 24-24 12-35z" fill="#837e7f"/><path d="M-5-20L-2 12 7 36 23 12 24-24z" fill="#716c6d"/><path d="M-22-32L-5-20-2 12-33 8-32-17z" fill="#5e5a5b"/><path d="M-33 8L-2 12 7 36-18 33z" fill="#494546"/>
                </g>
              </defs>
              <g stroke="#062c2e" stroke-width="2.500" stroke-linejoin="round">
                <path d="M425 440Q480 462 492 530 490 630 395 676V450z" fill="url(#sphere)"/>
                <path d="M452 448Q475 435 520 422C562 433 586 490 583 545L572 580 507 595 485 590Q500 490 452 448z" fill="url(#port)"/>
                <path d="M520 422C560 437 584 490 580 545L574 577" fill="none" stroke-width="5"/><path d="M480 434Q525 480 526 590M452 448Q507 500 508 594M463 443Q510 480 516 585M485 434Q537 490 531 585" fill="none"/>
                <path d="M380 472Q400 460 418 472L431 498Q434 530 420 546L398 548z" fill="url(#nut)"/><path d="M398 488L428 484M398 524L430 520M398 488V546" fill="none"/>
                <path d="M392 696Q412 706 420 726L423 744Q420 772 404 777L385 776z" fill="url(#nut)"/><path d="M390 716L417 718M390 742L423 742" fill="none"/>
                <path d="M240 345h30v65h-30z" fill="#777"/>
                <path d="M258 332V385C240 405 260 415 300 427L360 445 428 475V332z" fill="url(#neck)"/>
                <path d="M172 347L216 334 235 342 258 385Q240 403 272 417L360 445 361 465 380 478 352 487 355 600 340 815 330 500z" fill="#00c8ca"/>
                <path d="M330 485L358 473Q396 474 398 512L398 555 385 788Q380 805 363 809L340 816z" fill="#00aaad"/>
                <path d="M258 395Q275 425 355 432 360 438 358 448M325 379Q325 388 328 388 390 390 428 369" fill="none"/>
                <path d="M410 545Q438 605 398 674" fill="none"/>
              </g>
              <g stroke="#202020" stroke-width="3" stroke-linejoin="round">
                <path d="M104 385Q104 365 122 362L178 347 340 477Q353 485 352 515L350 590 340 814 292 830 277 826 205 769 128 703 98 540z" fill="#d4d4d4" stroke-width="2"/>
                <path d="M103 390Q110 372 132 382L282 506Q291 514 292 535L290 822 205 769 128 703 98 540z" fill="#a5a5a5" stroke-width="2"/>
                <path d="M120 364L281 495Q300 510 300 540L292 830M300 552L352 530M280 500L340 480M292 808L386 780" fill="none" stroke-width="2"/>
                <path d="M301 510Q340 492 350 510L349 590 340 812 297 826z" fill="#c9c9c9" stroke="none"/>
                <path d="M300 556L398 528M295 808L386 780" fill="none" stroke-width="2"/>
                <path d="M340 480Q353 490 352 515L350 600 341 812" stroke="#111" stroke-width="5" fill="none"/>
                <path d="M291 514L288 820" stroke="#eee" stroke-width="5"/><path d="M296 514L292 826" stroke="#444" stroke-width="2"/>
                <path d="M68 640q0 45 24 53l20-10-20-43z" fill="#4d4a43"/>
                <ellipse cx="195" cy="597" rx="37" ry="76" transform="rotate(-8 195 597)" fill="#cecece"/>
                <ellipse cx="190" cy="600" rx="30" ry="66" transform="rotate(-8 190 600)" fill="url(#pipe)" stroke-width="2"/>
                <path d="M84 545L160 530C190 545 207 620 193 680L125 702z" fill="url(#pipe)"/>
                <path d="M160 533C192 550 206 620 190 682" fill="none" stroke-width="5"/>
                <ellipse cx="104" cy="622" rx="40" ry="80" transform="rotate(-9 104 622)" fill="#bababa"/>
                <ellipse cx="106" cy="622" rx="32" ry="68" transform="rotate(-9 106 622)" fill="#d8d8d8"/>
                <ellipse cx="112" cy="620" rx="24" ry="55" transform="rotate(-9 112 620)" fill="#bebebe"/>
                <ellipse cx="115" cy="618" rx="18" ry="45" transform="rotate(-9 115 618)" fill="#e6e6e6"/>
              </g>
              <use href="#bolt" x="110" y="428"/><use href="#bolt" x="250" y="549"/><use href="#bolt" x="241" y="779"/>
              <g stroke="#20281d" stroke-width="3" stroke-linejoin="round">
                <path d="M258 310V350C280 384 400 386 430 348V310z" fill="url(#disc)"/>
                <path d="M452 300L580 192 940 88 969 70 968 92Q962 103 940 106L590 215Q575 218 570 226L442 340 434 350 430 318z" fill="#4f5e49"/>
                <path d="M260 310C262 280 310 265 385 266L518 160Q530 150 550 150L910 51C940 44 970 55 970 72 967 84 952 86 940 90L585 192Q575 196 565 206L452 300Q430 314 429 322 410 347 345 345 275 344 260 310z" fill="#6c8068"/>
                <path d="M272 306C285 265 370 260 410 285M270 310C278 344 400 350 424 319L438 313M385 266Q425 285 430 308L452 300M402 259L448 297M518 160L565 204M543 152L582 192M528 153L575 198M582 192V214M952 86V103M430 320L436 348" fill="none" stroke-width="2"/>
                <path d="M328 292L375 295 365 322 316 316z" fill="#dc8c82"/>
                <ellipse cx="931" cy="68" rx="20" ry="11" fill="#414e3d"/><ellipse cx="934" cy="68" rx="12" ry="9" fill="#b1b8ae" stroke-width="1"/>
              </g>
              <path d="M340 400L336 555" stroke="#97b25a" stroke-width="2"/><path d="M336 556L460 523 520 508" stroke="#727d8d" stroke-width="3"/><path d="M450 518l22 4-20 8z" fill="#55809b"/>
              <path d="M336 556L438 643" stroke="#736b87" stroke-width="3"/><path d="M403 615l16 5-1 12-14-4z" fill="#1418bc"/><path d="M430 640l14 2 2 12-17-8z" fill="#c66b24"/><text x="446" y="678" class="axis3 oz">Z</text>
            </svg>
            <svg class="triad" viewBox="0 0 60 70" aria-hidden="true"><path d="M15 43V18" stroke="#22b933" stroke-width="1.500"/><path d="M15 13l2 7h-4z" fill="#267d30"/><path d="M15 43l25-7" stroke="#ed2323" stroke-width="1.500"/><path d="M44 35l-7-1 1 4z" fill="#b51c1c"/><path d="M15 43l17 15" stroke="#1a16b1" stroke-width="1.500"/><path d="M33 58l-6-2 3-3z" fill="#1a16b1"/><text x="13" y="14" class="ay">Y</text><text x="43" y="38" class="ax">X</text><text x="31" y="65" class="az">Z</text></svg>
            <output class="scale">245.237mm</output>
          </div>
        </section>
      </div>

      <footer class="status"><span>选择命令或实体</span><div class="stools"><button class="hl" aria-label="管理器开关"><svg class="i"><use href="#tpane"/></svg></button><button aria-label="显示器"><svg class="i"><use href="#monitor"/></svg></button><button aria-label="输出"><svg class="i"><use href="#pane"/></svg></button><input type="text" aria-label="命令输入"><i class="corner"></i></div></footer>
    </section>
  </div>

  <section class="caption"><svg class="biglogo"><use href="#logo"/></svg><p>打开要插入零件的文件夹</p></section>
  <div class="taskbar"><i></i></div>
  <div class="pointer"><svg viewBox="0 0 12 18"><path d="M1 1v13l3-3 2 5 3-1-2-5h4z" fill="#fff" stroke="#222"/></svg></div>
</main>
</body>
</html>
```

FILE: styles.css
```css
* { box-sizing: border-box; }
body { margin: 0; font: 8px/12px "Noto Sans", "Noto Sans CJK SC", sans-serif; color: #3b3e42; }
button, input, select { font: inherit; color: inherit; margin: 0; padding: 0; border: 0; background: none; border-radius: 0; }
button { display: flex; align-items: center; justify-content: center; white-space: nowrap; }
h1, h2, p, ul { margin: 0; padding: 0; font-size: inherit; font-weight: 400; }
svg { display: block; flex: none; overflow: visible; }
.sprite { position: absolute; width: 0; height: 0; }
.i { width: 12px; height: 12px; }
.s { width: 8px; height: 8px; }
.gray { color: #a2a5a8; }
.blue { color: #2e8db4; }
.teal { color: #1684a4; }
.red { color: #b83437; }
.slate { color: #6b8797; }
.caret { display: block; flex: none; width: 4px; border: 2px solid transparent; border-top: 3px solid #4a4c50; border-bottom: 0; }
.hl { background: #fbdf7f; border: 1px solid #d9a843; }

/* Desktop */
.desktop { position: relative; min-height: 100vh; display: flex; flex-direction: column; overflow: hidden;
  background: radial-gradient(ellipse 40% 95% at 47% 85%, #1947a8 0, #1644a3 40%, #0c308a 100%); }
.net { position: absolute; right: 0; bottom: 0; width: 54%; height: 80px; }
.upper { position: relative; flex: 1; display: flex; padding-right: 3px; }
.shortcuts { width: 255px; padding-top: 4px; display: flex; flex-direction: column; }
.shortcuts a { width: 52px; height: 73px; display: flex; flex-direction: column; align-items: center; gap: 1px; color: #fff; text-decoration: none; white-space: nowrap; text-shadow: 1px 1px 1px #000; }
.shortcuts svg { width: 34px; height: 34px; }
.pointer { position: absolute; left: 143px; top: 293px; width: 26px; height: 26px; border-radius: 50%; background: #879d49; padding: 13px 0 0 12px; }
.pointer svg { width: 8px; height: 12px; }

/* Application window */
.window { flex: 1; min-width: 0; display: flex; flex-direction: column; background: #e3e5e8; border: 1px solid #aeb6c6; border-left: 2px solid #d9dde6; border-right: 2px solid #f2f3f5; border-bottom-color: #eee; }
.title { display: flex; align-items: center; height: 20px; padding: 0 6px 0 4px; color: #8d9094; }
.title > * { flex: 1; }
.title h1 { text-align: center; flex: 2; padding-left: 112px; white-space: nowrap; }
.quick { display: flex; align-items: center; gap: 4px; }
.quick .i { width: 12px; height: 12px; }
.quick > svg:first-child { margin-right: 3px; }
.caret.bar { box-sizing: content-box; width: 0; padding: 0; position: relative; }
.caret.bar::before { content: ""; position: absolute; left: -2px; top: -5px; width: 5px; height: 1px; background: #4a4c50; }
.wctl { display: flex; justify-content: flex-end; gap: 10px; }
.menu { display: flex; height: 16px; padding-right: 3px; border-bottom: 1px solid #ced2d7; }
.file { width: 51px; background: #2c5fb8; color: #fff; }
.tabs { flex: 1; display: flex; padding: 0 5px 0 1px; }
.tabs button { flex: 1 1 auto; padding: 0 1px; }
.tabs .on { background: #fff; border: 1px solid #ccd0d6; border-bottom: 0; }
.find { display: flex; align-items: center; width: 102px; height: 14px; background: #fff; border: 1px solid #ccd0d6; padding: 0 3px 0 1px; }
.find input { flex: 1; min-width: 0; outline: 0; }
.find input::placeholder { color: #7a7d80; }
.mctl { display: flex; align-items: center; gap: 4px; padding-left: 5px; color: #1c1c1e; }
.mctl .gray { margin-right: 3px; }

/* Ribbon */
.ribbon { display: grid; grid-template-columns: 112fr 168fr 121fr 58fr 50fr 111fr 41fr 49fr 67fr 42fr; height: 66px; background: #fcfcfd; border-bottom: 1px solid #ced2d7; }
.ribbon section { position: relative; min-width: 0; display: flex; flex-direction: column; justify-content: space-between; border-right: 1px solid #dfe3e9; padding-top: 2px; }
.ribbon section:last-child { border-right: 1px solid #dfe3e9; }
.ribbon h2 { text-align: center; color: #777f8b; height: 14px; }
.bigs { display: flex; padding-left: 5px; }
.bigs button { flex-direction: column; justify-content: flex-start; height: 46px; }
.bigs svg { width: 22px; height: 22px; margin-bottom: 2px; }
.bigs .caret { margin-top: 5px; }
.w26 { width: 26px; }
.w40 { width: 40px; }
.ribbon section:nth-child(2) .bigs { padding-left: 3px; }
.smalls { display: grid; grid-template-rows: repeat(3, 16px); grid-auto-flow: column; grid-auto-columns: 36px; justify-content: start; padding-left: 4px; }
.smalls.wide { grid-auto-columns: 52px; }
.smalls button { justify-content: flex-start; gap: 2px; overflow: visible; }
.smalls .caret { margin-left: 4px; }
.launch { position: absolute; right: 4px; bottom: 5px; }
.launch svg { width: 6px; height: 6px; }

/* Selection toolbar */
.toolbar { display: flex; align-items: center; height: 21px; padding-left: 2px; }
.toolbar button { width: 16px; height: 15px; flex: 0 1 auto; }
.toolbar .push { margin-left: 3px; }
.toolbar .i { width: 12px; height: 12px; }
.grip { width: 2px; height: 12px; margin-right: 2px; border-left: 1px dotted #777; }
.sep { width: 1px; height: 12px; margin: 0 1px; background: #c3c6ca; }
.grays { display: flex; color: #9a9da0; }
.sel { position: relative; display: flex; align-items: center; background: #fff; border: 1px solid #cdd1d6; height: 14px; color: #252729; }
.sel select { appearance: none; width: 100%; padding: 0 10px 0 2px; outline: 0; }
.sel::after { content: ""; position: absolute; right: 4px; top: 5px; border: 2px solid transparent; border-top: 3px solid #444; border-bottom: 0; pointer-events: none; }
.s1, .s3 { width: 68px; }
.s2 { width: 94px; }

/* Manager panel */
.work { flex: 1; display: flex; min-height: 0; }
.manager { width: 251px; display: flex; flex-direction: column; margin-right: 2px; }
.manager header { display: flex; align-items: center; gap: 6px; height: 14px; padding: 0 4px 0 3px; color: #9699a0; }
.manager header h2 { flex: 1; color: #3b3e42; }
.mbody { flex: 1; display: flex; }
.rail { width: 23px; border-right: 1px solid #c8ccd2; }
.rail button { width: 22px; height: 33px; }
.rail .on { background: #fff; }
.rail svg { width: 17px; height: 17px; }
.tree { flex: 1; display: flex; flex-direction: column; background: #fff; border-right: 1px solid #c8ccd2; border-bottom: 1px solid #c8ccd2; }
.filter { display: grid; grid-template-columns: 107px 1fr 17px 17px; height: 17px; border-bottom: 1px solid #cdd1d6; }
.filter .sel { height: 16px; }
.filter .sel::after { top: 6px; }
.filter input { min-width: 0; background: #fff; outline: 0; }
.filter button { border-left: 1px solid #cdd1d6; }
.thead { display: grid; grid-template-columns: 141px 1fr; height: 17px; background: #f3f5fa; border-bottom: 1px solid #d7dbe2; line-height: 16px; }
.thead span { padding-left: 3px; border-right: 1px solid #cdd3dc; }
.rows { flex: 1; background: repeating-linear-gradient(#fff 0 13px, #f5f5f5 13px 26px); }
.rows ul { list-style: none; width: 141px; border-right: 1px solid #dcdfe4; }
.rows li { height: 13px; overflow: hidden; white-space: nowrap; padding-left: 22px; position: relative; }
.rows label { display: flex; align-items: center; height: 13px; }
.rows label .i { margin: 0 3px; width: 11px; height: 11px; }
.rows input { appearance: none; flex: none; width: 9px; height: 9px; border: 1px solid #4c4c4c; background: #fff; position: relative; }
.rows input:checked::after { content: ""; position: absolute; left: 2px; top: -1px; width: 4px; height: 7px; border: solid #e1202c; border-width: 0 1px 1px 0; transform: rotate(40deg); }
.rows .root { display: flex; align-items: center; padding-left: 3px; gap: 2px; color: #1a1a8c; }
.rows .root .i { width: 11px; height: 11px; margin-left: 2px; }
.down { width: 5px; height: 5px; border: solid #555; border-width: 0 1px 1px 0; transform: rotate(45deg); }
.sub::before { content: ""; position: absolute; left: 12px; top: 4px; width: 4px; height: 4px; border: solid #888; border-width: 1px 1px 0 0; transform: rotate(45deg); }

/* Document view */
.doc { flex: 1; min-width: 0; display: flex; flex-direction: column; border-right: 1px solid #c8ccd2; margin-right: 1px; }
.dtabs { display: flex; align-items: center; height: 14px; padding-right: 5px; }
.dtab { width: 98px; height: 14px; gap: 4px; padding-left: 10px; background: #fcfcfc; border-top: 1px solid #ced2d7; }
.dtab .s { color: #856a3a; }
.add { width: 18px; color: #888; font-size: 12px; }
.dtabs .caret { margin-left: auto; }
.view { flex: 1; position: relative; background: linear-gradient(#fdfdfd, #9d9d9d); border-bottom: 1px solid #b5b8bb; overflow: hidden; }
.vtools { display: flex; align-items: center; height: 17px; padding-left: 80px; }
.vtools button { width: 16px; height: 14px; gap: 4px; }
.vtools .drop { width: 25px; }
.vtools .i { width: 12px; height: 12px; }
.sw { width: 11px; height: 6px; background: #000; }
.sw.cyan { width: 12px; height: 11px; background: #b9e8ee; border: 1px solid #5b6c70; }
.layer { width: 81px; padding-left: 5px; gap: 1px; }
.dot { flex: none; width: 8px; height: 8px; border-radius: 50%; background: #f4d81c; border: 1px solid #85853b; }
.tip { padding: 0 11px; line-height: 11px; color: #161616; }
.model { position: absolute; left: 130px; top: 41px; width: 340px; height: 290px; }
.axis3 { font-size: 36px; }
.oz { fill: #b96625; }
.triad { position: absolute; left: 30px; bottom: 26px; width: 60px; height: 70px; font-size: 12px; }
.ax { fill: #ed2323; }
.ay { fill: #31c23a; }
.az { fill: #1a16b1; }
.scale { position: absolute; left: 2px; bottom: 0; font-size: 12px; line-height: 12px; color: #111; }

/* Status bar */
.status { display: flex; align-items: center; height: 20px; padding-left: 4px; color: #55585c; }
.stools { margin-left: auto; display: flex; align-items: center; height: 17px; width: 40%; gap: 5px; padding: 0 3px 0 8px; border-left: 1px solid #c3c7cc; }
.status .stools { flex: 0 0 330px; }
.stools button { width: 15px; height: 14px; }
.stools input { flex: 1; min-width: 0; height: 15px; margin-left: 1px; background: #fff; border: 1px solid #d2d5d9; }
.corner { width: 6px; height: 6px; align-self: flex-end; border-right: 2px dotted #aaa; border-bottom: 2px dotted #aaa; }

/* Caption banner */
.caption { position: relative; height: 79px; padding: 16px 0 0 20px; }
.caption p { width: 463px; max-width: 100%; height: 42px; line-height: 44px; padding-left: 78px; border-radius: 6px; background: linear-gradient(#7d98cc, #8ba5db 50%, #6d98d0); color: #080808; font-size: 28px; white-space: nowrap; }
.biglogo { position: absolute; left: 0; top: 8px; width: 48px; height: 52px; }
.taskbar { position: relative; height: 1px; background: #0b1320; padding-left: 34px; }
.taskbar i { display: block; width: 202px; height: 1px; background: #e8ebef; }
```
